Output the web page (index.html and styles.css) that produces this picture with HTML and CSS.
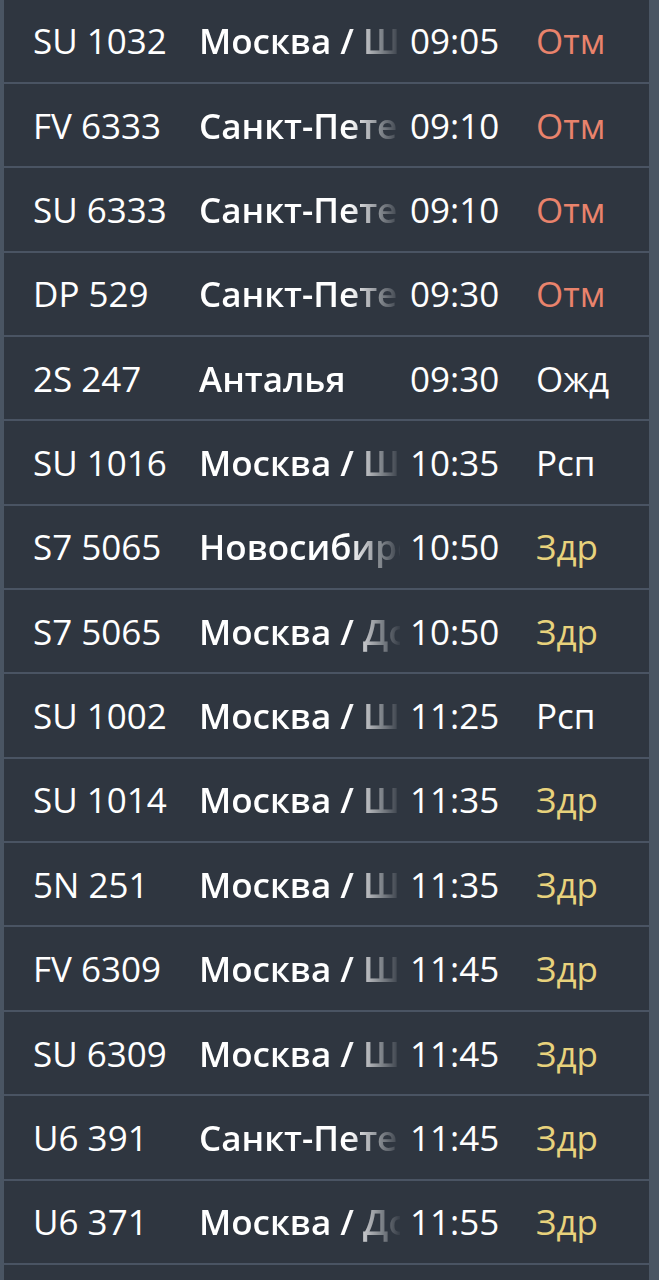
FILE: index.html
```html
<!DOCTYPE html>
<html lang="ru">
<head>
<meta charset="utf-8">
<link rel="stylesheet" href="styles.css">
</head>
<body>
<div class="board">
  <div class="row"><span class="flight">SU 1032</span><span class="city">Москва / Шереметьево</span><span class="time">09:05</span><span class="status cancel">Отм</span></div>
  <div class="row"><span class="flight">FV 6333</span><span class="city">Санкт-Петербург</span><span class="time">09:10</span><span class="status cancel">Отм</span></div>
  <div class="row"><span class="flight">SU 6333</span><span class="city">Санкт-Петербург</span><span class="time">09:10</span><span class="status cancel">Отм</span></div>
  <div class="row"><span class="flight">DP 529</span><span class="city">Санкт-Петербург</span><span class="time">09:30</span><span class="status cancel">Отм</span></div>
  <div class="row"><span class="flight">2S 247</span><span class="city">Анталья</span><span class="time">09:30</span><span class="status">Ожд</span></div>
  <div class="row"><span class="flight">SU 1016</span><span class="city">Москва / Шереметьево</span><span class="time">10:35</span><span class="status">Рсп</span></div>
  <div class="row"><span class="flight">S7 5065</span><span class="city">Новосибирск</span><span class="time">10:50</span><span class="status delay">Здр</span></div>
  <div class="row"><span class="flight">S7 5065</span><span class="city">Москва / Домодедово</span><span class="time">10:50</span><span class="status delay">Здр</span></div>
  <div class="row"><span class="flight">SU 1002</span><span class="city">Москва / Шереметьево</span><span class="time">11:25</span><span class="status">Рсп</span></div>
  <div class="row"><span class="flight">SU 1014</span><span class="city">Москва / Шереметьево</span><span class="time">11:35</span><span class="status delay">Здр</span></div>
  <div class="row"><span class="flight">5N 251</span><span class="city">Москва / Шереметьево</span><span class="time">11:35</span><span class="status delay">Здр</span></div>
  <div class="row"><span class="flight">FV 6309</span><span class="city">Москва / Шереметьево</span><span class="time">11:45</span><span class="status delay">Здр</span></div>
  <div class="row"><span class="flight">SU 6309</span><span class="city">Москва / Шереметьево</span><span class="time">11:45</span><span class="status delay">Здр</span></div>
  <div class="row"><span class="flight">U6 391</span><span class="city">Санкт-Петербург</span><span class="time">11:45</span><span class="status delay">Здр</span></div>
  <div class="row"><span class="flight">U6 371</span><span class="city">Москва / Домодедово</span><span class="time">11:55</span><span class="status delay">Здр</span></div>
  <div class="row"><span class="flight"></span><span class="city"></span><span class="time"></span><span class="status"></span></div>
</div>
</body>
</html>
```

FILE: styles.css
```css
html, body {
  margin: 0;
  padding: 0;
  background: #4a5563;
  height: 1280px;
  overflow: hidden;
}

.board {
  margin: 0 10px 0 4px;
  background: #2f3640;
  font-family: "Open Sans", "Noto Sans", sans-serif;
  font-size: 35px;
  color: #ffffff;
  height: 1280px;
  overflow: hidden;
}

.row {
  box-sizing: border-box;
  height: 84.36px;
  border-bottom: 2px solid #4a5463;
  display: grid;
  grid-template-columns: 166px 211px 126px 1fr;
  align-items: center;
  padding-left: 29px;
  white-space: nowrap;
}

.row:first-child {
  height: 83.9px;
}

.flight {
  font-weight: 400;
}

.city {
  font-weight: 600;
  overflow: hidden;
  text-overflow: clip;
  width: 201px;
  -webkit-mask-image: linear-gradient(to right, #000 150px, rgba(0,0,0,0.55) 174px, transparent 203px);
  mask-image: linear-gradient(to right, #000 150px, rgba(0,0,0,0.55) 174px, transparent 203px);
}

.time {
  font-weight: 400;
}

.status {
  font-weight: 400;
}

.cancel {
  color: #e9836c;
}

.delay {
  color: #e8d27c;
}
```
